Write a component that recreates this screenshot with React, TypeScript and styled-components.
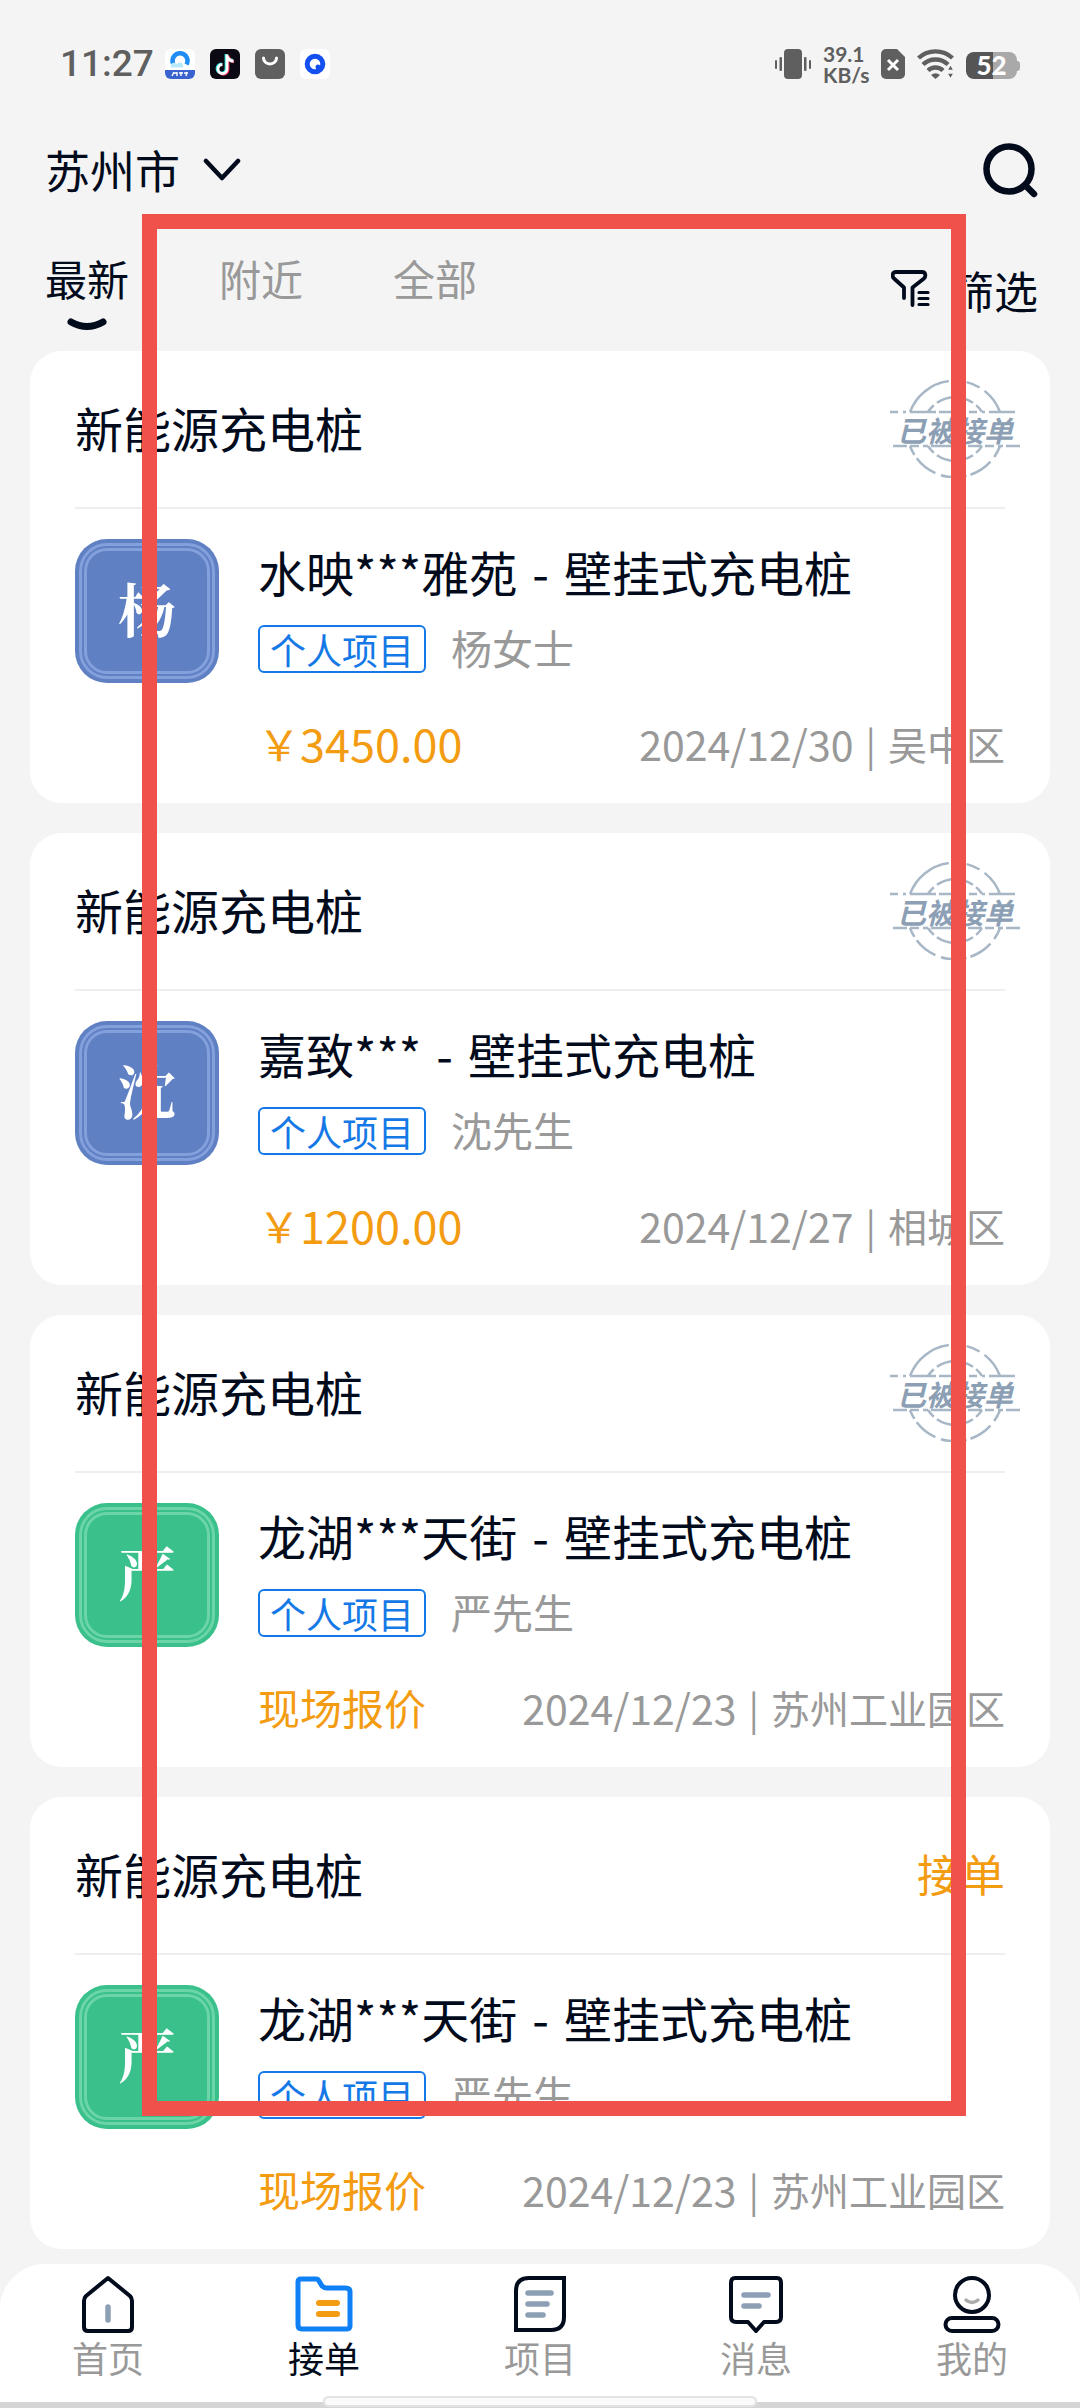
import React from 'react';
import styled, { createGlobalStyle } from 'styled-components';

const ink = '#020b1c';
const muted = '#999999';
const orange = '#f39c12';
const blue = '#1478e6';
const slate = '#8c9fb4';
const statusGrey = '#5f5f5f';

const GlobalStyle = createGlobalStyle`
  * { box-sizing: border-box; }
  body {
    margin: 0;
    background: #f4f4f4;
    color: ${ink};
    font-family: 'Noto Sans CJK SC', 'Noto Sans', sans-serif;
  }
  button {
    margin: 0;
    padding: 0;
    border: 0;
    background: none;
    color: inherit;
    font: inherit;
    cursor: pointer;
  }
  h2, h3, p, ul { margin: 0; padding: 0; font-weight: 400; }
  svg { display: block; flex: none; }
`;

const Page = styled.div`
  position: relative;
  display: flex;
  flex-direction: column;
  min-height: 100vh;
`;

const Marker = styled.div`
  position: absolute;
  inset: 214px 114px 292px 142px;
  border: 15px solid #f0524b;
  pointer-events: none;
`;

const StatusBar = styled.div`
  display: flex;
  align-items: center;
  justify-content: space-between;
  height: 128px;
  padding: 0 60px;
  color: ${statusGrey};
`;

const StatusGroup = styled.div<{ $gap: number }>`
  display: flex;
  align-items: center;
  gap: ${(p) => p.$gap}px;
`;

const Clock = styled.time`
  width: 90px;
  font-family: Roboto, 'Noto Sans', sans-serif;
  font-size: 37px;
  line-height: 36px;
  font-weight: 500;
`;

const Speed = styled.div`
  width: 46px;
  font-family: Lato, 'Noto Sans', sans-serif;
  font-size: 21px;
  line-height: 21px;
  font-weight: 700;
  white-space: pre-line;
`;

const Battery = styled.div`
  display: flex;
  align-items: center;
  padding-top: 3px;
`;

const BatteryBody = styled.div`
  width: 51px;
  height: 27px;
  border-radius: 8px;
  background: linear-gradient(90deg, #555555 52%, #a9a9a9 52%);
  color: #ffffff;
  font-family: Lato, 'Noto Sans', sans-serif;
  font-size: 26px;
  line-height: 27px;
  font-weight: 900;
  text-align: center;
`;

const BatteryTip = styled.div`
  width: 3px;
  height: 10px;
  border-radius: 0 3px 3px 0;
  background: #a9a9a9;
`;

const Header = styled.header`
  display: flex;
  align-items: center;
  justify-content: space-between;
  height: 84px;
  padding: 0 42px 0 45px;
`;

const CityButton = styled.button`
  display: flex;
  align-items: center;
  gap: 23px;
  font-size: 45px;
  line-height: 60px;
`;

const TabBar = styled.nav`
  display: flex;
  justify-content: space-between;
  height: 139px;
  padding: 36px 42px 0 45px;
`;

const Tabs = styled.div`
  display: flex;
  align-items: flex-start;
  gap: 90px;
`;

const Tab = styled.button<{ $active?: boolean }>`
  display: flex;
  flex-direction: column;
  align-items: center;
  gap: 10px;
  color: ${(p) => (p.$active ? ink : muted)};
  font-size: 42px;
  line-height: 60px;
`;

const FilterButton = styled.button`
  display: flex;
  align-items: center;
  gap: 20px;
  height: 84px;
  font-size: 44px;
  line-height: 60px;
  > svg { margin-bottom: 4px; }
`;

const List = styled.main`
  display: flex;
  flex-direction: column;
  gap: 30px;
  padding: 0 30px;
`;

const Card = styled.article`
  padding: 0 45px 30px;
  border-radius: 32px;
  background: #ffffff;
`;

const CardHead = styled.div`
  display: flex;
  align-items: center;
  justify-content: space-between;
  height: 158px;
  border-bottom: 2px solid #eeeeee;
`;

const Category = styled.h2`
  padding-bottom: 4px;
  font-size: 48px;
  line-height: 60px;
`;

const TakeButton = styled.button`
  padding-bottom: 4px;
  color: ${orange};
  font-size: 44px;
  line-height: 60px;
`;

const Stamp = styled.div`
  display: grid;
  place-items: center;
  margin-right: -15px;
  > * { grid-area: 1 / 1; }
`;

const StampText = styled.span`
  color: ${slate};
  font-size: 29px;
  line-height: 32px;
  font-weight: 700;
  font-style: italic;
`;

const CardBody = styled.div`
  display: flex;
  gap: 39px;
  padding-top: 30px;
`;

const Avatar = styled.div<{ $tone: string; $ring: string }>`
  display: grid;
  flex: none;
  width: 144px;
  height: 144px;
  padding: 4px;
  border-radius: 32px;
  background: ${(p) => p.$tone};
  > span {
    display: grid;
    place-items: center;
    padding-bottom: 8px;
    border: 8px double ${(p) => p.$ring};
    border-radius: 28px;
    color: #ffffff;
    font-family: 'Noto Serif CJK SC', 'Noto Sans CJK SC', serif;
    font-size: 58px;
    line-height: 60px;
    font-weight: 700;
  }
`;

const Info = styled.div`
  flex: 1;
  min-width: 0;
`;

const Title = styled.h3`
  display: flex;
  gap: 15px;
  height: 86px;
  font-size: 48px;
  line-height: 64px;
`;

const Owner = styled.div`
  display: flex;
  align-items: center;
  gap: 25px;
  height: 48px;
`;

const Tag = styled.span`
  height: 48px;
  padding: 0 10px;
  border: 2px solid ${blue};
  border-radius: 6px;
  color: ${blue};
  font-size: 36px;
  line-height: 44px;
`;

const OwnerName = styled.span`
  padding-bottom: 4px;
  color: ${muted};
  font-size: 41px;
  line-height: 48px;
`;

const Foot = styled.div`
  display: flex;
  align-items: center;
  justify-content: space-between;
  height: 60px;
  margin-top: 40px;
  line-height: 60px;
`;

const Price = styled.p`
  display: flex;
  color: ${orange};
  font-size: 42px;
`;

const Amount = styled.span`
  font-size: 45px;
`;

const Meta = styled.p`
  display: flex;
  gap: 12px;
  color: ${muted};
  font-size: 39px;
`;

const DateText = styled.time`
  font-size: 41px;
`;

const BottomNav = styled.nav`
  display: grid;
  grid-template-columns: repeat(5, 1fr);
  height: 138px;
  margin-top: 15px;
  padding-top: 11px;
  border-radius: 45px 45px 0 0;
  background: #ffffff;
`;

const NavItem = styled.button<{ $active?: boolean }>`
  display: flex;
  flex-direction: column;
  align-items: center;
  color: ${(p) => (p.$active ? ink : muted)};
  font-size: 36px;
  line-height: 48px;
`;

const GestureBar = styled.div`
  position: relative;
  height: 6px;
  background: #d6d6d6;
`;

const Handle = styled.div`
  position: absolute;
  left: 50%;
  bottom: 1px;
  width: 434px;
  height: 11px;
  margin-left: -217px;
  border: 2px solid #e2e2e2;
  border-radius: 6px;
  background: #fafafa;
`;

const CloudAppIcon = () => (
  <svg width="30" height="30" viewBox="0 0 30 30">
    <rect width="30" height="30" rx="6" fill="#fff" />
    <path d="M8 14.500A7.500 7.500 0 1 1 21.500 15.500" fill="none" stroke="#1f8df2" strokeWidth="4.500" />
    <path d="M6 18.500c-1-5 3-6 6-3.500 3-3 7-1 6 3.500z" fill="#b8eafc" />
    <path d="M0 21h30v3a6 6 0 0 1-6 6H6a6 6 0 0 1-6-6z" fill="#3a63cf" />
    <path d="M7 27l2-4M9 24h3M12 27v-4M14 24h4M16 23v4M19 24h4M21 27l1-4" stroke="#fff" strokeWidth="1.400" />
  </svg>
);

const NoteAppIcon = () => (
  <svg width="30" height="30" viewBox="0 0 30 30" fill="none" strokeWidth="2.800">
    <rect width="30" height="30" rx="6" fill="#0b0914" />
    <path d="M16 5v14.500a4.500 4.500 0 1 1-4.500-4.500M16 6c1 3.500 3 5 6.500 5" stroke="#25e3df" />
    <path d="M18 6.500v14.500a4.500 4.500 0 0 1-8 2.500M18.500 8c1 3 3 4.500 5.500 5" stroke="#f5365a" />
    <path d="M17 5.500v14.500a4.500 4.500 0 1 1-4.500-4.500M17 7c1 3.500 3 5 6.500 5" stroke="#fff" />
  </svg>
);

const BagAppIcon = () => (
  <svg width="30" height="30" viewBox="0 0 30 30">
    <rect width="30" height="30" rx="6" fill="#606060" />
    <path d="M8.500 9a6.500 6 0 0 0 13 0" fill="none" stroke="#fff" strokeWidth="3" strokeLinecap="round" />
  </svg>
);

const RingAppIcon = () => (
  <svg width="30" height="30" viewBox="0 0 30 30">
    <rect width="30" height="30" rx="6" fill="#fff" />
    <circle cx="15" cy="15" r="7.800" fill="none" stroke="#1450f0" strokeWidth="5" />
    <circle cx="18" cy="18" r="2.500" fill="#1450f0" />
  </svg>
);

const VibrateIcon = () => (
  <svg width="36" height="30" viewBox="0 0 36 30" fill={statusGrey}>
    <rect x="9" width="18" height="30" rx="4" />
    <rect x="4.500" y="8" width="2.500" height="14" rx="1" />
    <rect y="11" width="2" height="9" rx="1" />
    <rect x="29" y="8" width="2.500" height="14" rx="1" />
    <rect x="34" y="11" width="2" height="9" rx="1" />
  </svg>
);

const SimIcon = () => (
  <svg width="24" height="30" viewBox="0 0 24 30">
    <path d="M5 0h11l8 8v17a5 5 0 0 1-5 5H5a5 5 0 0 1-5-5V5a5 5 0 0 1 5-5z" fill={statusGrey} />
    <path d="M7 11l10 10M17 11L7 21" stroke="#fff" strokeWidth="3" />
  </svg>
);

const WifiIcon = () => (
  <svg width="37" height="30" viewBox="0 0 37 30" fill="none" stroke={statusGrey} strokeWidth="4.400">
    <path d="M1.500 9a25 25 0 0 1 34 0" />
    <path d="M6 15.500a18 18 0 0 1 25 0" />
    <path d="M11 21.500a11 11 0 0 1 15 0" />
    <path d="M14 26q4.500-3.500 9 0l-4.500 4z" fill={statusGrey} stroke="none" />
    <path d="M33.500 15.500l3.500 6h-7zM33.500 30l3.500-6h-7z" fill={statusGrey} stroke="#f4f4f4" strokeWidth="1.400" />
  </svg>
);

const ChevronIcon = () => (
  <svg width="38" height="24" viewBox="0 0 38 24" fill="none" stroke={ink} strokeWidth="4.500" strokeLinecap="round" strokeLinejoin="round">
    <path d="M3 3l16 17L35 3" />
  </svg>
);

const SearchIcon = () => (
  <svg width="55" height="55" viewBox="0 0 55 55" fill="none" stroke={ink} strokeWidth="6.500" strokeLinecap="round">
    <circle cx="26" cy="26" r="22.500" />
    <path d="M43 43l8 8" />
  </svg>
);

const SmileIcon = () => (
  <svg width="40" height="13" viewBox="0 0 40 13" fill="none" stroke={ink} strokeWidth="7" strokeLinecap="round">
    <path d="M4 4q16 9 32 0" />
  </svg>
);

const FilterIcon = () => (
  <svg width="39" height="37" viewBox="0 0 39 37" fill="none" stroke={ink} strokeWidth="3.800" strokeLinecap="round" strokeLinejoin="round">
    <path d="M13 28V17.500L3 8.500C1 6.500 1 2 5 2h26c4 0 4 4.500 2 6.500L21.500 17.500v17.500" />
    <path d="M28 22.500h9M28 28.500h9M28 34.500h9" strokeWidth="3.200" />
  </svg>
);

const StampRings = () => (
  <svg width="130" height="98" viewBox="0 0 130 98" fill="none" stroke={slate} strokeWidth="2.500" opacity="0.75">
    <path d="M20 32A48 48 0 0 1 110 32" strokeDasharray="52 5 8 5 14 6" />
    <path d="M20 66A48 48 0 0 0 110 66" strokeDasharray="10 4 24 6 12 4" />
    <path d="M38 32A32 32 0 0 1 92 32" strokeDasharray="9 4 22 4 12 4" />
    <path d="M38 66A32 32 0 0 0 92 66" strokeDasharray="9 4 22 4 12 4" />
    <path d="M0 32H128" strokeDasharray="8 5 3 4 26 3 14 4 9 3" />
    <path d="M3 66H130" strokeDasharray="14 3 9 4 5 3 34 3" />
  </svg>
);

const HomeIcon = () => (
  <svg width="58" height="58" viewBox="0 0 58 58" fill="none" stroke={ink} strokeWidth="4" strokeLinecap="round" strokeLinejoin="round">
    <path d="M29 3L51 21q2 2 2 5v26q0 4-4 4H9q-4 0-4-4V26q0-3 2-5z" />
    <path d="M29 32v13" stroke={slate} strokeWidth="5.500" />
  </svg>
);

const OrderIcon = () => (
  <svg width="58" height="58" viewBox="0 0 58 58" fill="none" stroke="#0f80f5" strokeWidth="5" strokeLinecap="round" strokeLinejoin="round">
    <path d="M6 4h15q2 0 3 2l3 5q2 2 5 2h19q4 0 4 4v34q0 3-4 3H7q-4 0-4-4V7q0-3 3-3z" />
    <path d="M24 28h18M24 39h18" stroke={orange} strokeWidth="6" />
  </svg>
);

const ProjectIcon = () => (
  <svg width="58" height="58" viewBox="0 0 58 58" fill="none" stroke={ink} strokeWidth="4" strokeLinecap="round">
    <path d="M18 3h35v39q0 13-13 13H5V16Q5 3 18 3z" />
    <path d="M17 18h23M17 29h19M17 40h15" stroke={slate} strokeWidth="5.500" />
  </svg>
);

const MessageIcon = () => (
  <svg width="58" height="58" viewBox="0 0 58 58" fill="none" stroke={ink} strokeWidth="4" strokeLinecap="round" strokeLinejoin="round">
    <path d="M8 3h42q4 0 4 5v34q0 5-5 5H37l-8 9-8-9H9q-5 0-5-5V8q0-5 4-5z" />
    <path d="M17 20h24M17 31h15" stroke={slate} strokeWidth="5.500" />
  </svg>
);

const MeIcon = () => (
  <svg width="58" height="58" viewBox="0 0 58 58" fill="none" stroke={ink} strokeWidth="4" strokeLinecap="round">
    <circle cx="29" cy="20" r="17" />
    <rect x="2.500" y="43" width="53" height="13" rx="6.500" />
    <path d="M23 25q6 5 12 0" stroke="#aaaaaa" strokeWidth="3.500" />
  </svg>
);

type Order = {
  id: number;
  avatar: string;
  tone: string;
  ring: string;
  place: string;
  owner: string;
  amount?: string;
  date: string;
  district: string;
  taken: boolean;
};

const blueTone = { tone: '#6080c4', ring: '#83a0dc' };
const greenTone = { tone: '#3ac08a', ring: '#6bd5a8' };

const orders: Order[] = [
  { id: 1, avatar: '杨', ...blueTone, place: '水映***雅苑', owner: '杨女士', amount: '3450.00', date: '2024/12/30', district: '吴中区', taken: true },
  { id: 2, avatar: '沈', ...blueTone, place: '嘉致***', owner: '沈先生', amount: '1200.00', date: '2024/12/27', district: '相城区', taken: true },
  { id: 3, avatar: '严', ...greenTone, place: '龙湖***天街', owner: '严先生', date: '2024/12/23', district: '苏州工业园区', taken: true },
  { id: 4, avatar: '严', ...greenTone, place: '龙湖***天街', owner: '严先生', date: '2024/12/23', district: '苏州工业园区', taken: false },
];

const OrderCard = ({ order }: { order: Order }) => (
  <Card>
    <CardHead>
      <Category>新能源充电桩</Category>
      {order.taken ? (
        <Stamp>
          <StampRings />
          <StampText>已被接单</StampText>
        </Stamp>
      ) : (
        <TakeButton type="button">接单</TakeButton>
      )}
    </CardHead>
    <CardBody>
      <Avatar $tone={order.tone} $ring={order.ring}>
        <span>{order.avatar}</span>
      </Avatar>
      <Info>
        <Title>
          <span>{order.place}</span>
          <span>-</span>
          <span>壁挂式充电桩</span>
        </Title>
        <Owner>
          <Tag>个人项目</Tag>
          <OwnerName>{order.owner}</OwnerName>
        </Owner>
        <Foot>
          <Price>
            {order.amount ? (
              <>
                ￥<Amount>{order.amount}</Amount>
              </>
            ) : (
              '现场报价'
            )}
          </Price>
          <Meta>
            <DateText>{order.date}</DateText>
            <span>|</span>
            <span>{order.district}</span>
          </Meta>
        </Foot>
      </Info>
    </CardBody>
  </Card>
);

const navItems = [
  { label: '首页', Icon: HomeIcon },
  { label: '接单', Icon: OrderIcon, active: true },
  { label: '项目', Icon: ProjectIcon },
  { label: '消息', Icon: MessageIcon },
  { label: '我的', Icon: MeIcon },
];

export default function App() {
  return (
    <>
      <GlobalStyle />
      <Page>
        <StatusBar>
          <StatusGroup $gap={15}>
            <Clock>11:27</Clock>
            <CloudAppIcon />
            <NoteAppIcon />
            <BagAppIcon />
            <RingAppIcon />
          </StatusGroup>
          <StatusGroup $gap={12}>
            <VibrateIcon />
            <Speed>{'39.1\nKB/s'}</Speed>
            <SimIcon />
            <WifiIcon />
            <Battery>
              <BatteryBody>52</BatteryBody>
              <BatteryTip />
            </Battery>
          </StatusGroup>
        </StatusBar>
        <Header>
          <CityButton type="button">
            苏州市
            <ChevronIcon />
          </CityButton>
          <button type="button" aria-label="搜索">
            <SearchIcon />
          </button>
        </Header>
        <TabBar>
          <Tabs>
            <Tab type="button" $active>
              最新
              <SmileIcon />
            </Tab>
            <Tab type="button">附近</Tab>
            <Tab type="button">全部</Tab>
          </Tabs>
          <FilterButton type="button">
            <FilterIcon />
            筛选
          </FilterButton>
        </TabBar>
        <List>
          {orders.map((order) => (
            <OrderCard key={order.id} order={order} />
          ))}
        </List>
        <BottomNav>
          {navItems.map(({ label, Icon, active }) => (
            <NavItem key={label} type="button" $active={active}>
              <Icon />
              {label}
            </NavItem>
          ))}
        </BottomNav>
        <GestureBar>
          <Handle />
        </GestureBar>
        <Marker />
      </Page>
    </>
  );
}
